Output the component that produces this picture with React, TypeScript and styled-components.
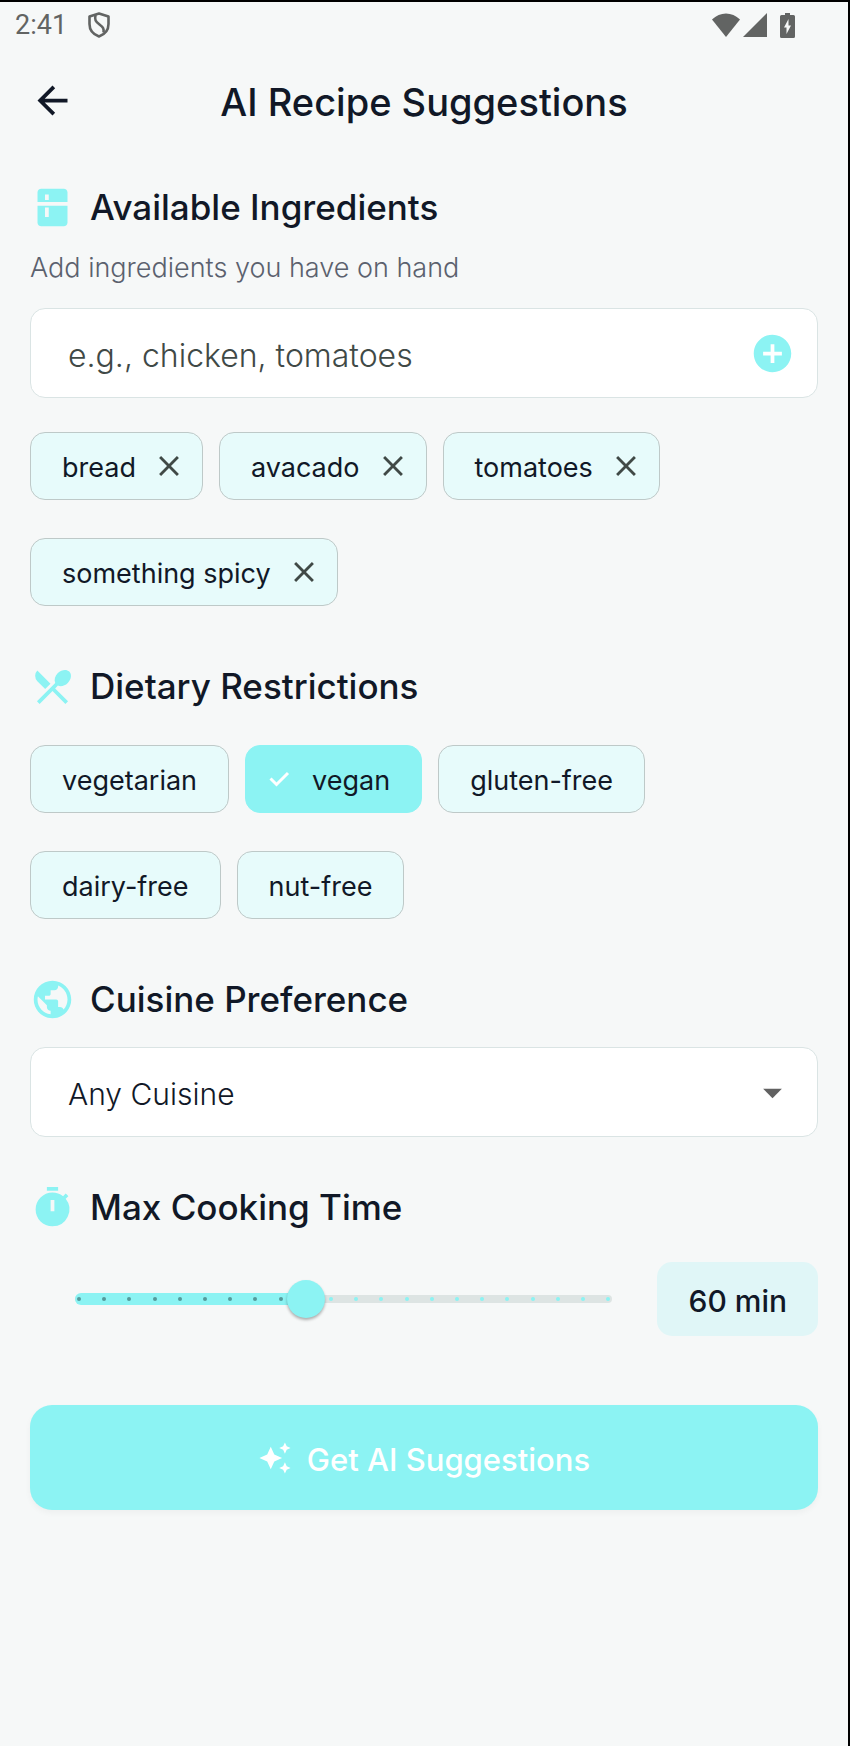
import React, { useState } from "react";
import styled, { createGlobalStyle } from "styled-components";
import {
  MdAddCircle,
  MdArrowBack,
  MdAutoAwesome,
  MdClose,
  MdPublic,
  MdRestaurantMenu,
} from "react-icons/md";

const color = {
  page: "#f6f8f8",
  ink: "#111827",
  muted: "#5b616e",
  hint: "#404946",
  status: "#626463",
  accent: "#8cf3f3",
  chip: "#e7fbfb",
  chipBorder: "#bec9c8",
  fieldBorder: "#dae4e4",
  badge: "#e0f6f7",
  track: "#dde4e3",
};

const GlobalStyle = createGlobalStyle`
  *, *::before, *::after { box-sizing: border-box; }
  html, body { margin: 0; background: ${color.page}; }
  body, button, input, select { font-family: Inter, "Open Sans", sans-serif; }
  h1, h2, p { margin: 0; }
  svg { display: block; flex: none; }
`;

const Screen = styled.div`
  min-height: 100vh;
  border-top: 2px solid #000;
  border-right: 2px solid #000;
  background: ${color.page};
  color: ${color.ink};
`;

const StatusBar = styled.div`
  display: flex;
  align-items: center;
  height: 46px;
  padding: 0 53px 0 15px;
  color: ${color.status};
`;

const Clock = styled.time`
  margin-right: 21px;
  font-family: Roboto, sans-serif;
  font-size: 27px;
  line-height: 32px;
  font-weight: 400;
`;

const StatusIcons = styled.div`
  display: flex;
  align-items: center;
  gap: 3px;
  margin-left: auto;

  svg:last-child { margin-left: 10px; }
`;

const Header = styled.header`
  display: grid;
  grid-template-columns: 45px 1fr 45px;
  align-items: center;
  height: 104px;
  padding: 0 30px;
`;

const IconButton = styled.button`
  display: grid;
  place-items: center;
  padding: 0;
  border: 0;
  background: none;
  color: inherit;
  cursor: pointer;
`;

const Title = styled.h1`
  padding-top: 4px;
  font-size: 38px;
  line-height: 48px;
  font-weight: 500;
  text-align: center;
  white-space: nowrap;
`;

const Main = styled.main`
  display: flex;
  flex-direction: column;
  gap: 47px;
  padding: 32px 30px 60px;
`;

const Group = styled.section`
  display: flex;
  flex-direction: column;
`;

const Label = styled.span`
  padding-top: 4px;
`;

const Heading = styled.h2`
  display: flex;
  align-items: center;
  gap: 15px;
  height: 46px;
  font-size: 35px;
  line-height: 42px;
  font-weight: 500;

  svg { color: ${color.accent}; }
`;

const Hint = styled.p`
  margin-top: 20px;
  font-size: 27px;
  line-height: 36px;
  font-weight: 300;
  color: ${color.muted};
`;

const Field = styled.div<{ $top: number }>`
  display: flex;
  align-items: center;
  height: 90px;
  margin-top: ${(p) => p.$top}px;
  padding: 0 22px 0 37px;
  border: 1px solid ${color.fieldBorder};
  border-radius: 15px;
  background: #fff;
`;

const TextInput = styled.input`
  flex: 1;
  min-width: 0;
  height: 60px;
  padding: 4px 0 0;
  border: 0;
  outline: 0;
  background: none;
  font-size: 32px;
  font-weight: 300;
  color: ${color.ink};

  &::placeholder { color: ${color.hint}; opacity: 1; }
`;

const Select = styled.select`
  flex: 1;
  min-width: 0;
  height: 60px;
  padding: 4px 0 0;
  border: 0;
  outline: 0;
  appearance: none;
  background: none;
  font-size: 30px;
  font-weight: 300;
  color: ${color.ink};
`;

const Chips = styled.div<{ $top: number }>`
  display: flex;
  flex-wrap: wrap;
  gap: 38px 16px;
  margin-top: ${(p) => p.$top}px;
  margin-bottom: 10px;
`;

const Chip = styled.span`
  display: flex;
  align-items: center;
  gap: 16px;
  height: 68px;
  padding: 0 16px 0 31px;
  border: 1px solid ${color.chipBorder};
  border-radius: 15px;
  background: ${color.chip};
  font-size: 27px;
  line-height: 36px;
`;

const ToggleChip = styled.button<{ $on: boolean }>`
  display: flex;
  align-items: center;
  gap: 16px;
  height: 68px;
  padding: 0 31px 0 ${(p) => (p.$on ? 16 : 31)}px;
  border: 1px solid ${(p) => (p.$on ? color.accent : color.chipBorder)};
  border-radius: 15px;
  background: ${(p) => (p.$on ? color.accent : color.chip)};
  color: ${color.ink};
  font-size: 27px;
  line-height: 36px;
  cursor: pointer;
`;

const TimeRow = styled.div`
  display: flex;
  align-items: center;
  margin-top: 32px;
`;

const SliderBox = styled.div`
  display: grid;
  flex: 1;
  align-items: center;
  padding: 0 30px;

  > * { grid-area: 1 / 1; }
`;

const Track = styled.div`
  display: grid;
  align-items: center;
  margin: 0 15px;

  > * { grid-area: 1 / 1; }
`;

const TrackRest = styled.div`
  height: 8px;
  border-radius: 4px;
  background: ${color.track};
`;

const TrackFill = styled.div`
  height: 12px;
  border-radius: 6px 0 0 6px;
  background: ${color.accent};
`;

const Ticks = styled.div`
  display: flex;
  justify-content: space-between;
  padding: 0 2px;
`;

const Tick = styled.i<{ $passed: boolean }>`
  width: 4px;
  height: 4px;
  border-radius: 2px;
  background: ${(p) => (p.$passed ? "#559a9b" : color.accent)};
`;

const Range = styled.input`
  width: 100%;
  height: 38px;
  margin: 0;
  appearance: none;
  background: none;
  cursor: pointer;

  &::-webkit-slider-thumb {
    appearance: none;
    width: 38px;
    height: 38px;
    border-radius: 50%;
    background: ${color.accent};
    box-shadow: 0 2px 3px rgba(0, 0, 0, 0.3);
  }
`;

const Minutes = styled.output`
  padding: 18px 31px 14px;
  border-radius: 15px;
  background: ${color.badge};
  font-size: 30px;
  line-height: 42px;
  font-weight: 500;
  white-space: nowrap;
`;

const Submit = styled.button`
  display: flex;
  align-items: center;
  justify-content: center;
  gap: 15px;
  height: 105px;
  margin-top: 22px;
  border: 0;
  border-radius: 22px;
  background: ${color.accent};
  box-shadow: 0 3px 6px rgba(0, 0, 0, 0.04);
  color: #fff;
  font-size: 31px;
  line-height: 42px;
  font-weight: 500;
  cursor: pointer;
`;

const Fridge = () => (
  <svg width="45" height="45" viewBox="0 0 24 24" fill="currentColor" aria-hidden="true">
    <path d="M18 2H6c-1.100 0-2 .9-2 2v5h16V4c0-1.100-.9-2-2-2zm-8 6H8V5h2v3zM4 20c0 1.100.9 2 2 2h12c1.100 0 2-.9 2-2v-9H4v9zm4-8h2v5H8v-5z" />
  </svg>
);

const Timer = () => (
  <svg width="45" height="45" viewBox="0 0 24 24" fill="currentColor" aria-hidden="true">
    <path d="M9 1h6v2H9zM19.030 7.390l1.420-1.420c-.43-.51-.9-.99-1.410-1.410l-1.420 1.420A8.962 8.962 0 0 0 12 4c-4.970 0-9 4.030-9 9s4.020 9 9 9a8.994 8.994 0 0 0 7.030-14.610zM13 14h-2V8h2v6z" />
  </svg>
);

const Check = () => (
  <svg width="34" height="34" viewBox="0 0 34 34" fill="none" stroke="#fff" strokeWidth="3" aria-hidden="true">
    <path d="M8.500 16.500 14.500 22.500 26 11" />
  </svg>
);

const Caret = () => (
  <svg width="45" height="45" viewBox="0 0 24 24" fill="#616161" aria-hidden="true">
    <path d="M7 10l5 5 5-5z" />
  </svg>
);

const Shield = () => (
  <svg width="22" height="26" viewBox="0 0 22 26" fill="none" stroke="currentColor" strokeWidth="2.600" aria-hidden="true">
    <path d="M11 1.500 20.500 4.500V12c0 6-4 10.500-9.500 12.500C5.500 22.500 1.500 18 1.500 12V4.500z" strokeLinejoin="round" />
    <path d="M7.500 3c-1 5 0 6.500 4 9.500s4.500 4.500 4 8" />
  </svg>
);

const Wifi = () => (
  <svg width="28" height="24" viewBox="0 0 28 24" fill="currentColor" aria-hidden="true">
    <path d="M14 24 0 6.500C4 2.500 9 .5 14 .5s10 2 14 6z" />
  </svg>
);

const Signal = () => (
  <svg width="24" height="24" viewBox="0 0 24 24" fill="currentColor" aria-hidden="true">
    <path d="M0 24 24 0v24z" />
  </svg>
);

const Battery = () => (
  <svg width="15" height="25" viewBox="0 0 15 25" fill="currentColor" aria-hidden="true">
    <path d="M5 0h5v2h3.500A1.500 1.500 0 0 1 15 3.500v20a1.500 1.500 0 0 1-1.500 1.500h-12A1.500 1.500 0 0 1 0 23.500v-20A1.500 1.500 0 0 1 1.500 2H5z" />
    <path d="M8.500 6 4 14.500h2.500V21L11 12.500H8.500z" fill={color.page} />
  </svg>
);

const DIETS = ["vegetarian", "vegan", "gluten-free", "dairy-free", "nut-free"];
const CUISINES = ["Any Cuisine", "Italian", "Mexican", "Indian", "Thai"];
const MIN = 15;
const MAX = 120;
const STEP = 5;
const STOPS = Array.from({ length: (MAX - MIN) / STEP + 1 }, (_, i) => MIN + i * STEP);

export default function App() {
  const [items, setItems] = useState(["bread", "avacado", "tomatoes", "something spicy"]);
  const [draft, setDraft] = useState("");
  const [diets, setDiets] = useState(["vegan"]);
  const [minutes, setMinutes] = useState(60);

  const add = () => {
    const name = draft.trim();
    if (name && !items.includes(name)) setItems([...items, name]);
    setDraft("");
  };
  const toggle = (d: string) =>
    setDiets(diets.includes(d) ? diets.filter((x) => x !== d) : [...diets, d]);

  return (
    <Screen>
      <GlobalStyle />
      <StatusBar>
        <Clock>2:41</Clock>
        <Shield />
        <StatusIcons>
          <Wifi />
          <Signal />
          <Battery />
        </StatusIcons>
      </StatusBar>
      <Header>
        <IconButton type="button" aria-label="Back">
          <MdArrowBack size={45} />
        </IconButton>
        <Title>AI Recipe Suggestions</Title>
      </Header>
      <Main>
        <Group>
          <Heading id="ingredients"><Fridge />Available Ingredients</Heading>
          <Hint>Add ingredients you have on hand</Hint>
          <Field $top={22}>
            <TextInput
              aria-labelledby="ingredients"
              placeholder="e.g., chicken, tomatoes"
              value={draft}
              onChange={(e) => setDraft(e.target.value)}
              onKeyDown={(e) => e.key === "Enter" && add()}
            />
            <IconButton type="button" aria-label="Add ingredient" onClick={add}>
              <MdAddCircle size={45} color={color.accent} />
            </IconButton>
          </Field>
          <Chips $top={34}>
            {items.map((name) => (
              <Chip key={name}>
                <Label>{name}</Label>
                <IconButton
                  type="button"
                  aria-label={`Remove ${name}`}
                  onClick={() => setItems(items.filter((x) => x !== name))}
                >
                  <MdClose size={34} color={color.hint} />
                </IconButton>
              </Chip>
            ))}
          </Chips>
        </Group>

        <Group>
          <Heading><MdRestaurantMenu size={45} />Dietary Restrictions</Heading>
          <Chips $top={36}>
            {DIETS.map((d) => {
              const on = diets.includes(d);
              return (
                <ToggleChip key={d} type="button" $on={on} aria-pressed={on} onClick={() => toggle(d)}>
                  {on && <Check />}
                  <Label>{d}</Label>
                </ToggleChip>
              );
            })}
          </Chips>
        </Group>

        <Group>
          <Heading id="cuisine"><MdPublic size={45} />Cuisine Preference</Heading>
          <Field $top={25}>
            <Select aria-labelledby="cuisine">
              {CUISINES.map((c) => <option key={c}>{c}</option>)}
            </Select>
            <Caret />
          </Field>
        </Group>

        <Group>
          <Heading id="time"><Timer />Max Cooking Time</Heading>
          <TimeRow>
            <SliderBox>
              <Track>
                <TrackRest />
                <TrackFill style={{ width: `${((minutes - MIN) / (MAX - MIN)) * 100}%` }} />
                <Ticks>
                  {STOPS.map((s) => <Tick key={s} $passed={s <= minutes} />)}
                </Ticks>
              </Track>
              <Range
                type="range"
                aria-labelledby="time"
                min={MIN}
                max={MAX}
                step={STEP}
                value={minutes}
                onChange={(e) => setMinutes(Number(e.target.value))}
              />
            </SliderBox>
            <Minutes>{minutes} min</Minutes>
          </TimeRow>
        </Group>

        <Submit type="button">
          <MdAutoAwesome size={34} />
          <Label>Get AI Suggestions</Label>
        </Submit>
      </Main>
    </Screen>
  );
}
